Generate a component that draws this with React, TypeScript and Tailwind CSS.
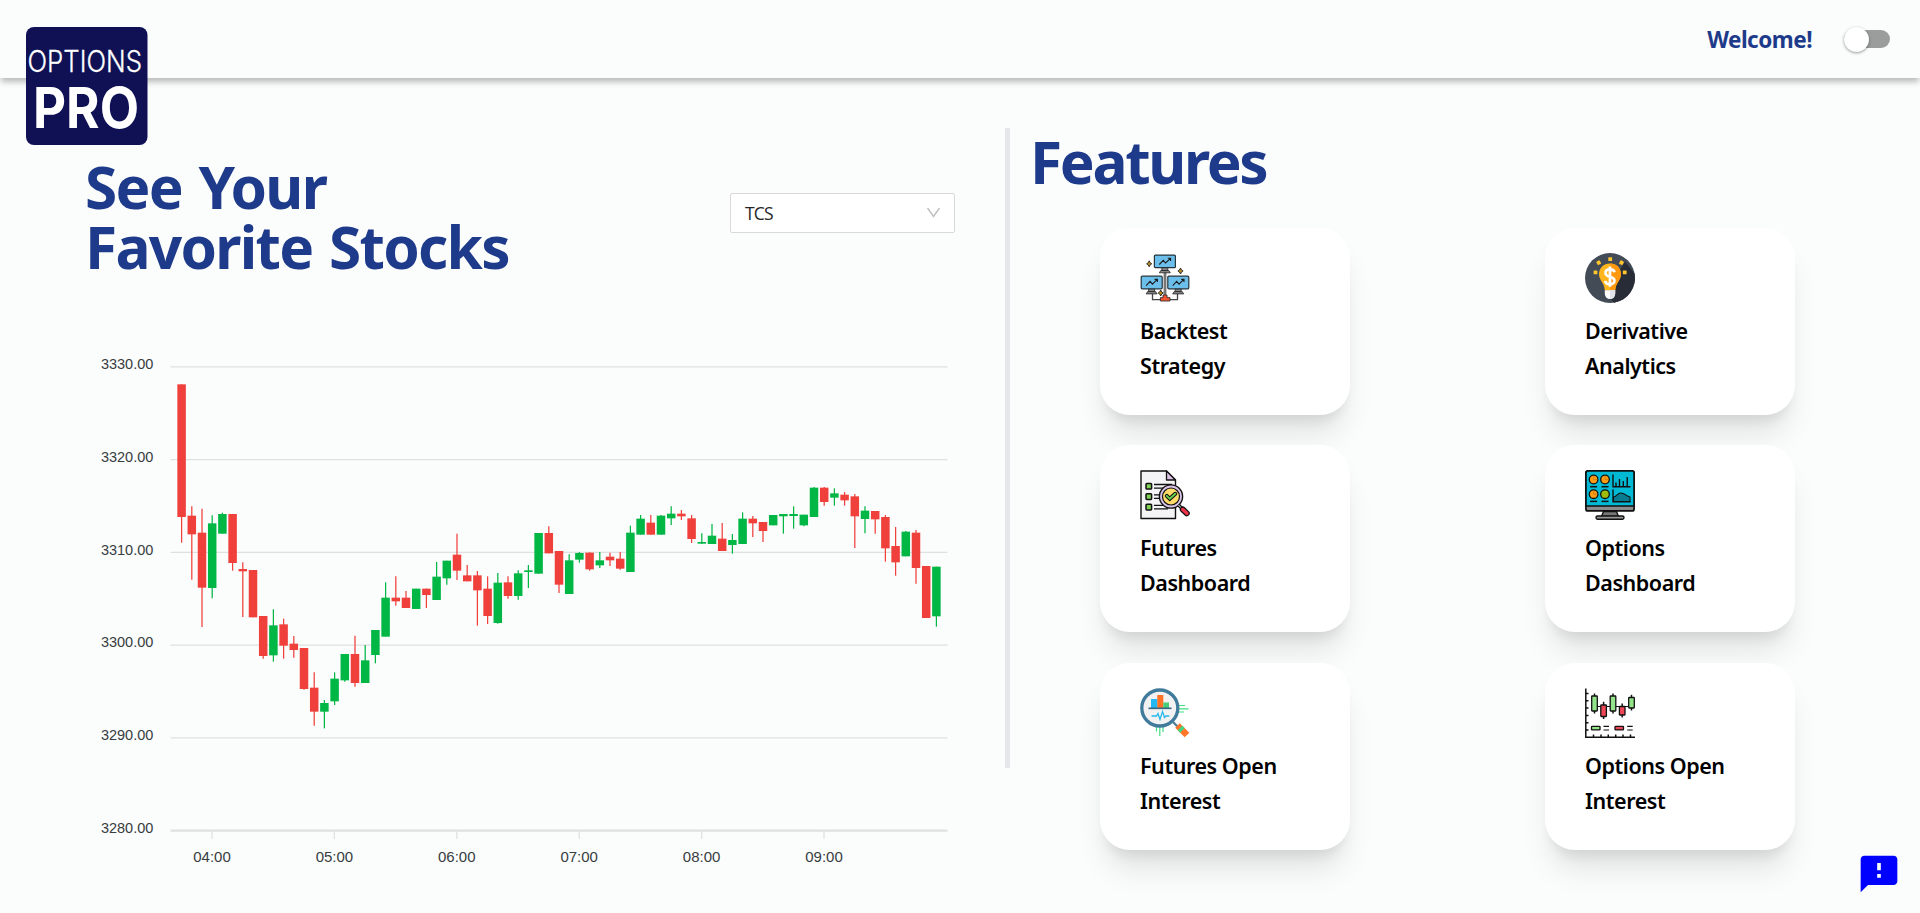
import React from "react";

// [direction, high, body top, body bottom, low], in thirds of a pixel from the top of the chart
type Candle = [0 | 1, number, number, number, number];

const candles: Candle[] = [
  [0, 133, 133, 531, 608], [0, 499, 527, 583, 719], [0, 506, 578, 743, 861], [1, 526, 550, 744, 775],
  [1, 518, 522, 581, 581], [0, 522, 522, 669, 692], [0, 667, 687, 694, 831], [0, 690, 690, 832, 832],
  [0, 828, 828, 948, 956], [1, 808, 856, 946, 965], [0, 836, 853, 917, 956], [0, 888, 911, 930, 953],
  [0, 924, 924, 1047, 1049], [0, 997, 1043, 1115, 1157], [1, 1080, 1089, 1115, 1165], [1, 997, 1016, 1084, 1095],
  [1, 942, 942, 1021, 1025], [0, 887, 942, 1029, 1040], [1, 915, 961, 1029, 1029], [1, 870, 870, 945, 970],
  [1, 727, 773, 890, 890], [0, 709, 773, 784, 797], [0, 753, 773, 804, 804], [1, 746, 746, 807, 807],
  [0, 746, 746, 765, 804], [1, 666, 710, 780, 780], [1, 662, 662, 715, 734], [0, 581, 644, 692, 720],
  [0, 675, 706, 724, 724], [0, 693, 706, 751, 857], [0, 709, 746, 828, 852], [1, 699, 728, 849, 851],
  [0, 709, 727, 768, 776], [1, 691, 700, 768, 779], [1, 675, 691, 696, 744], [1, 579, 579, 701, 701],
  [0, 559, 579, 640, 640], [0, 633, 633, 734, 759], [1, 643, 661, 762, 762], [1, 636, 639, 659, 668],
  [0, 637, 638, 688, 692], [1, 636, 661, 676, 684], [0, 638, 650, 661, 678], [0, 636, 656, 686, 689],
  [1, 557, 578, 696, 696], [1, 525, 536, 584, 584], [0, 525, 548, 584, 584], [1, 525, 527, 584, 584],
  [1, 499, 521, 535, 555], [0, 510, 521, 529, 540], [0, 525, 535, 597, 609], [1, 580, 606, 611, 611],
  [1, 552, 587, 612, 612], [0, 549, 596, 633, 633], [1, 582, 600, 615, 641], [1, 517, 536, 612, 612],
  [0, 528, 536, 550, 591], [0, 546, 546, 573, 606], [1, 525, 525, 556, 556], [1, 522, 522, 529, 581],
  [1, 499, 522, 528, 566], [1, 524, 524, 556, 559], [1, 441, 443, 531, 531], [0, 441, 443, 486, 497],
  [1, 445, 460, 473, 497], [0, 456, 464, 481, 497], [0, 462, 469, 529, 624], [1, 499, 512, 537, 580],
  [0, 513, 513, 538, 581], [0, 525, 531, 625, 665], [0, 561, 618, 667, 707], [1, 573, 575, 649, 649],
  [0, 570, 578, 684, 731], [0, 678, 678, 834, 834], [1, 680, 680, 829, 860],
];

const priceLabels = ["3330.00", "3320.00", "3310.00", "3300.00", "3290.00", "3280.00"];
const timeLabels = ["04:00", "05:00", "06:00", "07:00", "08:00", "09:00"];

function CandleChart() {
  return (
    <svg width="880" height="550" viewBox="85 0 880 550" className="block">
      {priceLabels.map((_, i) => (
        <line key={i} x1="170.5" x2="947.5" y1={26.9 + i * 92.74} y2={26.9 + i * 92.74} stroke="#e0e0e0" strokeWidth={i === 5 ? 2.2 : 1.4} />
      ))}
      {priceLabels.map((p, i) => (
        <text key={p} x="153.3" y={29.3 + i * 92.66} textAnchor="end" className="fill-[#373d3f] font-['Liberation_Sans',sans-serif] text-[14.5px]">{p}</text>
      ))}
      {timeLabels.map((t, i) => (
        <g key={t}>
          <line x1={212 + i * 122.4} x2={212 + i * 122.4} y1="491" y2="499" stroke="#e0e0e0" strokeWidth="1.25" />
          <text x={212 + i * 122.4} y="522" textAnchor="middle" className="fill-[#373d3f] font-['Liberation_Sans',sans-serif] text-[15px]">{t}</text>
        </g>
      ))}
      {candles.map(([up, h, t, b, l], i) => {
        const x = 181.6 + i * 10.2;
        const color = up ? "#00b746" : "#ef403c";
        return (
          <g key={i}>
            <line x1={x} x2={x} y1={h / 3} y2={l / 3} stroke={color} strokeWidth="1.25" />
            <rect x={x - 4.25} y={t / 3} width="8.5" height={(b - t) / 3} fill={color} />
          </g>
        );
      })}
    </svg>
  );
}

function Monitor({ x, y }: { x: number; y: number }) {
  return (
    <g transform={`translate(${x} ${y})`}>
      <path d="M8 13h6v3H8z" fill="#888" stroke="#222" strokeWidth=".8" />
      <path d="M7 16h8l1.5 2.3h-11z" fill="#888" stroke="#222" strokeWidth=".8" />
      <rect x=".6" y=".6" width="21" height="12.6" rx="1" fill="#6bbfea" stroke="#26343c" strokeWidth="1.2" />
      <path d="M5.5 10l4-4.2 2.3 2.7 4.6-4.4M14 3.8h2.8v2.6" fill="none" stroke="#1b1b1b" strokeWidth="1.1" />
    </g>
  );
}

function BacktestIcon() {
  return (
    <svg viewBox="0 0 50 50" className="size-[50px]">
      <path d="M25 18v26" stroke="#444" strokeWidth="2.6" />
      <path d="M25 18v26" stroke="#999" strokeWidth="1.2" />
      <path d="M12.5 41v5.6h25V41" fill="none" stroke="#444" strokeWidth="1.3" />
      <Monitor x={13.8} y={1.5} />
      <Monitor x={0.6} y={22.6} />
      <Monitor x={27.2} y={22.6} />
      <path d="M23 42h4v2.6h3V48h-9.6v-3.4H23z" fill="#f4532f" stroke="#333" strokeWidth=".9" />
      {[[9.2, 10.8], [40.5, 18], [20.7, 40]].map(([x, y]) => (
        <path key={x} d={`M${x} ${y - 3}l1 2 1.6 1-1.6 1-1 2-1-2-1.6-1 1.6-1z`} fill="#b98f1c" stroke="#222" strokeWidth=".9" />
      ))}
    </svg>
  );
}

function DerivativeIcon() {
  return (
    <svg viewBox="0 0 50 50" className="size-[50px]">
      <circle cx="25" cy="25" r="25" fill="#434b57" />
      <path d="M40 8.5l9.5 12A25 25 0 0 1 29 49.7L21 41z" fill="#272c36" />
      <g fill="#ffc62d">
        <rect x="23.3" y="4.3" width="3.8" height="3.8" rx=".5" />
        <rect x="11.800" y="7.800" width="3.8" height="3.8" rx=".5" transform="rotate(-30 13.7 9.7)" />
        <rect x="34.600" y="7.800" width="3.8" height="3.8" rx=".5" transform="rotate(30 36.5 9.7)" />
        <rect x="8.6" y="17.500" width="3.8" height="3.8" rx=".5" />
        <rect x="37.800" y="17.500" width="3.8" height="3.8" rx=".5" />
      </g>
      <path d="M25 10.4c-6.500 0-11 4.600-11 10.700 0 3.900 2 6.400 3.800 9.300 1.200 2 1.800 4.300 2 7h10.400c.2-2.700.8-5 2-7 1.800-2.900 3.800-5.400 3.800-9.300 0-6.100-4.500-10.700-11-10.700z" fill="#ffb61c" />
      <path d="M25 10.400c6.500 0 11 4.600 11 10.700 0 3.900-2 6.400-3.800 9.300-1.200 2-1.800 4.300-2 7H25z" fill="#ff9811" />
      <path d="M19.800 37.200h10.400v3.500a5.200 5.200 0 0 1-10.400 0z" fill="#fff" />
      <path d="M25 37.200h5.200v3.500A5.200 5.200 0 0 1 25 45.900z" fill="#dfe2eb" />
      <path d="M25 13.500v20.300M29.500 19.200c-.3-2-2-2.900-4.500-2.900-2.700 0-4.500 1.400-4.500 3.600 0 5 9 2.700 9 7.600 0 2.300-1.900 3.800-4.500 3.800-2.800 0-4.500-1.200-4.700-3.400" fill="none" stroke="#fff" strokeWidth="2.700" />
    </svg>
  );
}

function FuturesIcon() {
  return (
    <svg viewBox="0 0 50 50" className="size-[50px]">
      <path d="M1 1h25.500l9 9v38.500H1z" fill="#f4f3f5" stroke="#111" strokeWidth="1.400" strokeLinejoin="round" />
      <path d="M26.500 1v9h9z" fill="#dbbfe5" stroke="#111" strokeWidth="1.300" strokeLinejoin="round" />
      {[13.5, 23.8, 34.3].map((y) => (
        <g key={y}>
          <rect x="6" y={y} width="5.600" height="5.600" rx=".8" fill="#80cf57" stroke="#111" strokeWidth="1.500" />
          <path d={`M14 ${y + 1}h18M14 ${y + 4.6}h14`} stroke="#111" strokeWidth="1.300" />
        </g>
      ))}
      <circle cx="31" cy="26.500" r="11.600" fill="#d9c4e8" stroke="#111" strokeWidth="1.400" />
      <circle cx="31" cy="26.500" r="8.500" fill="#ffdc69" stroke="#111" strokeWidth="1.200" />
      <path d="M26.800 25.800l3 3 5.500-5" fill="none" stroke="#111" strokeWidth="4" strokeLinecap="round" />
      <path d="M26.800 25.800l3 3 5.500-5" fill="none" stroke="#67d34c" strokeWidth="1.900" strokeLinecap="round" />
      <path d="M38.500 35l4 4" stroke="#111" strokeWidth="3.400" />
      <path d="M38.500 35l3 3" stroke="#fff" strokeWidth="1" />
      <path d="M42.800 39.500l4 3.800" stroke="#111" strokeWidth="6" strokeLinecap="round" />
      <path d="M42.800 39.500l4 3.800" stroke="#ed3347" strokeWidth="3.500" strokeLinecap="round" />
    </svg>
  );
}

function OptionsIcon() {
  return (
    <svg viewBox="0 0 50 50" className="size-[50px]">
      <rect x=".9" y=".9" width="48.200" height="40" rx="2" fill="#898b8d" stroke="#111" strokeWidth="1.700" />
      <path d="M1 36V3q0-2 2-2h44q2 0 2 2v33z" fill="#00b9d4" stroke="#111" strokeWidth="1.600" />
      <path d="M18.500 41.500h13l2 5h-17z" fill="#777" stroke="#111" strokeWidth="1.400" />
      <rect x="11" y="46" width="28" height="3.200" rx="1.600" fill="#999" stroke="#111" strokeWidth="1.400" />
      {[[8.6, 9.5], [20, 9.5], [8.6, 24.2], [20, 24.2]].map(([x, y], i) => (
        <g key={i}>
          <circle cx={x} cy={y} r="4.300" fill={i === 3 ? "#9fbc0b" : "#ff9c14"} stroke="#111" strokeWidth="1.300" />
          {i < 3 && <path d={`M${x} ${y - 4}v4h4`} fill="none" stroke="#b5701a" strokeWidth=".6" />}
          <path d={`M${x - 3.5} ${y + 7.2}h7`} stroke="#111" strokeWidth="1.500" />
        </g>
      ))}
      <path d="M28 4.500v12.300h17.500M31 16v-3.500M34.500 16V9M38.300 16V11M42.200 16V7" fill="none" stroke="#111" strokeWidth="1.400" />
      <path d="M28.500 31.500v-4.500c3.500-.5 3.500-4 7.500-4s5 3.200 9 4v4.500z" fill="#087b91" stroke="#111" strokeWidth="1.100" />
      <path d="M28 19.500v12.200h17.500" fill="none" stroke="#111" strokeWidth="1.400" />
    </svg>
  );
}

function FuturesInterestIcon() {
  return (
    <svg viewBox="0 0 50 50" className="size-[50px]">
      <path d="M38 17.500h7M38 20.800h10.500M38 24h6M16.500 38v5.500M19.800 38v10M23 38v6" stroke="#3fe084" strokeWidth="1.200" />
      <path d="M33 34l5 5" stroke="#557f98" strokeWidth="2.400" />
      <circle cx="19.800" cy="20" r="18" fill="#f2f2f3" stroke="#417b9c" strokeWidth="3.300" />
      <rect x="11" y="11" width="6.500" height="9" fill="#21b8f5" />
      <rect x="17.300" y="7" width="6" height="13" fill="#ff7124" />
      <rect x="23.300" y="14.500" width="5.700" height="5.500" fill="#45cd78" />
      <path d="M8.500 20.300h23" stroke="#386b87" strokeWidth="1.700" />
      <path d="M11.500 28h5l1.500-2.500 2 6 2.500-8 2 6 1.300-1.500h3.500" fill="none" stroke="#27b9eb" strokeWidth="1.300" />
      <path d="M37.500 37.500l9.500 9.500" stroke="#ff762b" strokeWidth="6.500" />
      <path d="M40 40l2.400 2.400" stroke="#41d783" strokeWidth="6.500" />
    </svg>
  );
}

function OptionsInterestIcon() {
  const bars = [
    [9.5, 8, 15, 5.5, 25.5, 1], [18.6, 17, 11.5, 13.8, 31, 0], [28, 8, 15, 5.5, 25.5, 1],
    [37.2, 18.5, 8.5, 15.5, 29.5, 0], [46.5, 9.5, 10.5, 6.8, 22.5, 1],
  ];
  return (
    <svg viewBox="0 0 50 50" className="size-[50px]">
      <path d="M.8.500v48.700H50M1 5.500h2.500M1 12.800h2.500M1 20h2.500M1 27.500h2.500M1 34.800h2.500M1 42h2.500M8.500 49v-2.500M16 49v-2.500M23.300 49v-2.500M30.700 49v-2.500M38 49v-2.500M45.500 49v-2.500" fill="none" stroke="#111" strokeWidth="1.500" />
      <path d="M12 18.500h4M21.500 18.500H25M31 18.500h5M40 18.500h4" stroke="#111" strokeWidth="1.100" />
      {bars.map(([x, y, h, top, bottom, up]) => (
        <g key={x}>
          <path d={`M${x} ${top}V${bottom}`} stroke="#111" strokeWidth="1.500" />
          <rect x={x - 2.8} y={y} width="5.600" height={h} rx=".5" fill={up ? "#92e38a" : "#ee4757"} stroke="#111" strokeWidth="1.300" />
        </g>
      ))}
      <rect x="6.500" y="38.300" width="8.500" height="3.600" rx=".6" fill="#92e38a" stroke="#111" strokeWidth="1.300" />
      <rect x="30" y="38.300" width="8.500" height="3.600" rx=".6" fill="#ee4757" stroke="#111" strokeWidth="1.300" />
      <path d="M18.500 38.300H24M18.500 42H24M42.200 38.300h5.500M42.200 42h5.500" stroke="#111" strokeWidth="1.200" />
    </svg>
  );
}

const features = [
  { icon: <BacktestIcon />, lines: ["Backtest", "Strategy"] },
  { icon: <DerivativeIcon />, lines: ["Derivative", "Analytics"] },
  { icon: <FuturesIcon />, lines: ["Futures", "Dashboard"] },
  { icon: <OptionsIcon />, lines: ["Options", "Dashboard"] },
  { icon: <FuturesInterestIcon />, lines: ["Futures Open", "Interest"] },
  { icon: <OptionsInterestIcon />, lines: ["Options Open", "Interest"] },
];

function Logo() {
  return (
    <svg viewBox="0 0 122 118" className="h-[118px] w-[122px] shrink-0 overflow-visible">
      <rect width="121.500" height="118" rx="8" fill="#101155" />
      <text x="1.500" y="44.800" textLength="114.500" lengthAdjust="spacingAndGlyphs" fill="#fff" stroke="#fff" strokeWidth=".3" className="font-['Inter',sans-serif] text-[29.5px] font-light">OPTIONS</text>
      <text x="7" y="101" textLength="106" lengthAdjust="spacingAndGlyphs" fill="#fff" className="font-['Inter',sans-serif] text-[57px] font-bold">PRO</text>
    </svg>
  );
}

export default function App() {
  return (
    <div className="relative h-[913px] w-full overflow-hidden bg-[#fbfcfc] font-['Noto_Sans',sans-serif]">
      <header className="relative flex h-[78px] items-start justify-between pl-[26px] pr-[30px] pt-[27px] shadow-[0_5px_6px_-1px_rgba(0,0,0,0.26)]">
        <Logo />
        <div className="flex items-start">
          <span className="-mt-[4px] mr-[32px] text-[22.5px] leading-[33px] font-bold tracking-[-0.5px] text-[#1e3a8a]">Welcome!</span>
          <div className="-mt-px flex h-[26px] w-[46px] items-center">
            <div className="flex h-[18px] w-full items-center rounded-full bg-[#9b9c9c]">
              <div className="size-[25px] shrink-0 rounded-full bg-white shadow-[0_1px_3px_rgba(0,0,0,0.4)]" />
            </div>
          </div>
        </div>
      </header>

      <main className="flex">
        <section className="w-[1005px] pl-[85px] pt-[78px]">
          <div className="flex h-[184px] items-start justify-between pr-[50px]">
            <h1 className="text-[58.5px] leading-[60px] font-bold tracking-[-1.7px] [word-spacing:3px] text-[#1e3a8a]">See Your<br />Favorite Stocks</h1>
            <div className="mt-[37px] flex h-[40px] w-[225px] items-center justify-between rounded-[2px] border border-[#d9d9d9] bg-white pr-[13px] pl-[14px]">
              <span className="font-['Open_Sans',sans-serif] text-[17.5px] tracking-[-0.8px] text-[#262626]">TCS</span>
              <svg width="15" height="12" viewBox="0 0 15 12" fill="none" stroke="#bfbfbf" strokeWidth="1.400"><path d="M1.500 1l6 8.500 6-8.500" /></svg>
            </div>
          </div>
          <CandleChart />
        </section>
        <div className="mt-[50px] h-[640px] w-[5px] shrink-0 bg-[#e5e7eb]" />
        <section className="flex-1 pt-[53px] pl-[20px]">
          <h1 className="text-[58.5px] leading-[60px] font-bold tracking-[-2.3px] text-[#1e3a8a]">Features</h1>
          <div className="mt-[36.5px] ml-[70px] grid grid-cols-[250px_250px] gap-x-[195px] gap-y-[30.5px]">
            {features.map((f) => (
              <article key={f.lines.join(" ")} className="h-[187.2px] rounded-[30px] bg-white pt-[25px] pl-[40px] shadow-[0_25px_31px_-6px_rgba(0,0,0,0.1),0_12px_12px_-6px_rgba(0,0,0,0.08)]">
                {f.icon}
                <p className="mt-[10px] text-[21.5px] leading-[35px] font-semibold tracking-[-0.45px] whitespace-nowrap text-black">{f.lines[0]}<br />{f.lines[1]}</p>
              </article>
            ))}
          </div>
        </section>
      </main>

      <button aria-label="Feedback" className="absolute top-[852px] left-[1857px]">
        <svg viewBox="0 0 24 24" className="size-[44px] fill-[#0000ff]"><path d="M20 2H4c-1.100 0-1.990.9-1.990 2L2 22l4-4h14c1.100 0 2-.9 2-2V4c0-1.100-.9-2-2-2zm-7 12h-2v-2h2v2zm0-4h-2V6h2v4z" /></svg>
      </button>
    </div>
  );
}
